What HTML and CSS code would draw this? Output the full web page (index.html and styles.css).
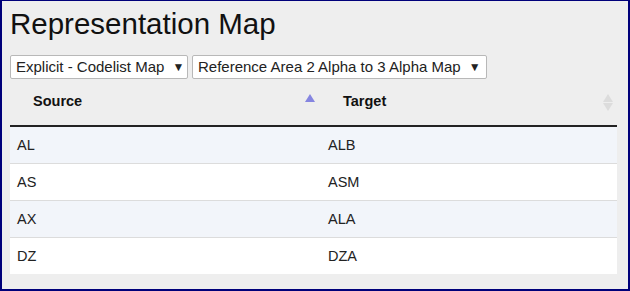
FILE: index.html
```html
<!DOCTYPE html>
<html>
<head>
<meta charset="utf-8">
<link rel="stylesheet" href="styles.css">
</head>
<body>
<div class="frame">
  <h1 class="title">Representation Map</h1>
  <div class="controls">
    <div class="select sel-type">Explicit - Codelist Map <span class="caret">▼</span></div>
    <div class="select sel-map">Reference Area 2 Alpha to 3 Alpha Map <span class="caret">▼</span></div>
  </div>
  <table class="grid">
    <thead>
      <tr>
        <th class="col-src">Source<span class="sort asc"></span></th>
        <th class="col-tgt">Target<span class="sort both"></span></th>
      </tr>
    </thead>
    <tbody>
      <tr class="odd"><td>AL</td><td>ALB</td></tr>
      <tr class="even"><td>AS</td><td>ASM</td></tr>
      <tr class="odd"><td>AX</td><td>ALA</td></tr>
      <tr class="even"><td>DZ</td><td>DZA</td></tr>
    </tbody>
  </table>
</div>
</body>
</html>
```
FILE: styles.css
```css
html, body { margin: 0; padding: 0; }
body { font-family: "Liberation Sans", Arial, sans-serif; color: #111; }
.frame {
  width: 630px; height: 291px; box-sizing: border-box;
  background: #eeeeee;
  border: 2px solid #00007a; border-top-width: 1px;
  padding: 0 0 0 8px;
}
.title {
  margin: 0; font-weight: normal; font-size: 29.5px; line-height: 34px;
  padding-top: 6px; height: 46px; box-sizing: border-box; color: #111;
}
.controls { display: flex; gap: 4px; height: 33px; align-items: flex-start; padding-top: 7px; margin-top: 1px; box-sizing: border-box; }
.select {
  background: #fff; border: 1px solid #b8b8b8; height: 24px; box-sizing: border-box;
  font-size: 15px; line-height: 22px; padding: 0 5px 0 5px; color: #222;
  border-radius: 2px; white-space: nowrap;
}
.sel-type { width: 178px; }
.sel-map { width: 295px; }
.caret { font-size: 12px; margin-left: 4px; vertical-align: 1px; }
.grid { border-collapse: collapse; width: 607px; margin-top: 6px; }
.grid th {
  font-size: 14.5px; font-weight: bold; text-align: left; height: 28px; padding: 0 0 10px 0; position: relative;
  border-bottom: 2px solid #222; color: #111;
}
.col-src { width: 312px; padding-left: 23px !important; box-sizing: border-box; }
.col-tgt { padding-left: 21px !important; }
.grid td { height: 36px; padding: 0 0 0 7px; font-size: 14.5px; color: #222; border-top: 1px solid #dcdcdc; }
.grid tbody tr:first-child td { border-top: none; }
.grid tr.odd td { background: #f2f5fa; }
.grid tr.even td { background: #ffffff; }
.grid td:nth-child(2) { padding-left: 6px; }
.sort { position: absolute; top: 7px; }
.sort.asc { right: 7px; width: 0; height: 0; border-left: 5px solid transparent; border-right: 5px solid transparent; border-bottom: 8px solid #8585e0; }
.sort.both { right: 4px; top: 7px; width: 10px; height: 17px; }
.sort.both::before, .sort.both::after { content: ""; position: absolute; left: 0; width: 0; height: 0; border-left: 5px solid transparent; border-right: 5px solid transparent; }
.sort.both::before { top: 0; border-bottom: 8px solid #dcdcdc; }
.sort.both::after { top: 9px; border-top: 8px solid #dcdcdc; }
```
